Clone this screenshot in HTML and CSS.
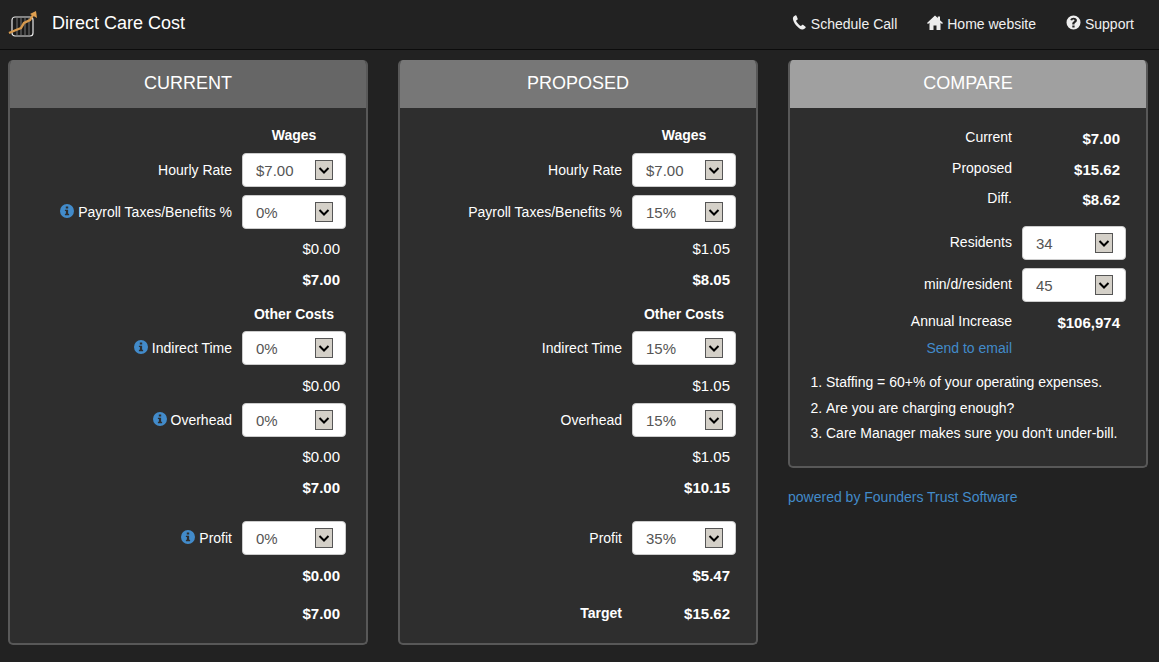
FILE: index.html
```html
<!DOCTYPE html>
<html lang="en">
<head>
    <meta charset="UTF-8">
    <title>Direct Care Cost</title>
    <link rel="stylesheet" href="styles.css">
</head>
<body>
    <svg class="defs" width="0" height="0">
        <symbol id="i-info" viewBox="0 0 14 14">
            <path fill-rule="evenodd" d="M7 0a7 7 0 1 1 0 14A7 7 0 0 1 7 0zM5.8 2.4v2.1h2.4V2.4zM4.9 5.7v1.4h1v2.6h-1v1.5h4.2V9.7h-1v-4z"/>
        </symbol>
    </svg>

    <nav class="topbar">
        <div class="brand">
            <svg class="logo" width="30" height="30" viewBox="0 0 30 30">
                <rect x="4" y="8" width="21" height="19" rx="3" fill="#1a1a1a" stroke="#e8e8e8" stroke-width="1.2"/>
                <path d="M9 9v17M13 9v17M17 9v17M21 9v17" stroke="#777" stroke-width="1"/>
                <path d="M1 24l7-3 5-2 3-5 6-3 3-5" fill="none" stroke="#d79a4e" stroke-width="2.4"/>
                <path d="M22 5l6-3 1 7z" fill="#e0a050"/>
            </svg>
            <span class="brand-name">Direct Care Cost</span>
        </div>
        <div class="nav-links">
            <a href="#">
                <svg width="15" height="15" viewBox="0 0 15 15"><path d="M3.6.3C2.6.7 1 1.8.9 3.3c-.1 2 1.200 4.600 3.100 6.900 2 2.300 4.300 4.100 6.300 4.400 1.500.2 2.700-1 3.400-2 .2-.3.100-.7-.2-.9l-2.500-1.900c-.3-.2-.7-.2-1 .1l-1 1.200c-.9-.3-2-1.200-2.900-2.300C4.900 7.700 4.200 6.500 4.100 5.600l1.300-.8c.3-.2.400-.6.300-1L4.500.7C4.300.3 3.900.1 3.600.3z"/></svg>
                Schedule Call
            </a>
            <a href="#">
                <svg width="16" height="15" viewBox="0 0 16 15"><path d="M8 .5L0 8l1 1 1.500-1.300V15h4v-4.500h3V15h4V7.700L15 9l1-1-3-2.800V1.500h-2.200v1.600z"/></svg>
                Home website
            </a>
            <a href="#">
                <svg width="15" height="15" viewBox="0 0 15 15"><path fill-rule="evenodd" d="M7.500.5a7 7 0 1 1 0 14 7 7 0 0 1 0-14zM6.300 10.500v2h2.300v-2zM7.600 2.800c-1.700 0-2.900.8-3.300 2.200l1.800.6c.2-.7.700-1 1.400-1 .6 0 1 .3 1 .8 0 .4-.3.700-.9 1.100-.9.600-1.300 1.200-1.300 2.300v.6h2.200v-.3c0-.6.200-.9.900-1.400.9-.6 1.500-1.300 1.500-2.500 0-1.500-1.300-2.400-3.300-2.400z"/></svg>
                Support
            </a>
        </div>
    </nav>

    <main class="columns">

        <section class="panel">
            <h2 class="panel-head head-current">CURRENT</h2>
            <div class="panel-body">
                <div class="row"><span></span><strong class="col-title">Wages</strong></div>
                <div class="row gap-8"><label>Hourly Rate</label><select class="pick"><option>$7.00</option></select></div>
                <div class="row gap-8"><label><svg class="info"><use href="#i-info"/></svg>Payroll Taxes/Benefits %</label><select class="pick"><option>0%</option></select></div>
                <div class="row gap-9"><span></span><span class="plain">$0.00</span></div>
                <div class="row gap-11"><span></span><strong class="amount">$7.00</strong></div>
                <div class="row gap-15"><span></span><strong class="col-title">Other Costs</strong></div>
                <div class="row gap-7"><label><svg class="info"><use href="#i-info"/></svg>Indirect Time</label><select class="pick"><option>0%</option></select></div>
                <div class="row gap-10"><span></span><span class="plain">$0.00</span></div>
                <div class="row gap-8"><label><svg class="info"><use href="#i-info"/></svg>Overhead</label><select class="pick"><option>0%</option></select></div>
                <div class="row gap-9"><span></span><span class="plain">$0.00</span></div>
                <div class="row gap-11"><span></span><strong class="amount">$7.00</strong></div>
                <div class="row gap-24"><label><svg class="info"><use href="#i-info"/></svg>Profit</label><select class="pick"><option>0%</option></select></div>
                <div class="row gap-10"><span></span><strong class="amount">$0.00</strong></div>
                <div class="row gap-18"><span></span><strong class="amount">$7.00</strong></div>
            </div>
        </section>

        <section class="panel">
            <h2 class="panel-head head-proposed">PROPOSED</h2>
            <div class="panel-body">
                <div class="row"><span></span><strong class="col-title">Wages</strong></div>
                <div class="row gap-8"><label>Hourly Rate</label><select class="pick"><option>$7.00</option></select></div>
                <div class="row gap-8"><label>Payroll Taxes/Benefits %</label><select class="pick"><option>15%</option></select></div>
                <div class="row gap-9"><span></span><span class="plain">$1.05</span></div>
                <div class="row gap-11"><span></span><strong class="amount">$8.05</strong></div>
                <div class="row gap-15"><span></span><strong class="col-title">Other Costs</strong></div>
                <div class="row gap-7"><label>Indirect Time</label><select class="pick"><option>15%</option></select></div>
                <div class="row gap-10"><span></span><span class="plain">$1.05</span></div>
                <div class="row gap-8"><label>Overhead</label><select class="pick"><option>15%</option></select></div>
                <div class="row gap-9"><span></span><span class="plain">$1.05</span></div>
                <div class="row gap-11"><span></span><strong class="amount">$10.15</strong></div>
                <div class="row gap-24"><label>Profit</label><select class="pick"><option>35%</option></select></div>
                <div class="row gap-10"><span></span><strong class="amount">$5.47</strong></div>
                <div class="row gap-18"><strong class="target">Target</strong><strong class="amount">$15.62</strong></div>
            </div>
        </section>

        <div class="side">
            <section class="panel">
                <h2 class="panel-head head-compare">COMPARE</h2>
                <div class="panel-body compare-body">
                    <div class="row"><label>Current</label><strong class="amount">$7.00</strong></div>
                    <div class="row gap-11"><label>Proposed</label><strong class="amount">$15.62</strong></div>
                    <div class="row gap-10"><label>Diff.</label><strong class="amount">$8.62</strong></div>
                    <div class="row gap-17"><label>Residents</label><select class="pick"><option>34</option></select></div>
                    <div class="row gap-8"><label>min/d/resident</label><select class="pick"><option>45</option></select></div>
                    <div class="row gap-10"><label>Annual Increase</label><strong class="amount">$106,974</strong></div>
                    <div class="row gap-6"><a class="mail" href="#">Send to email</a><span></span></div>
                    <ol class="notes">
                        <li>Staffing = 60+% of your operating expenses.</li>
                        <li>Are you are charging enough?</li>
                        <li>Care Manager makes sure you don't under-bill.</li>
                    </ol>
                </div>
            </section>
            <a class="powered" href="#">powered by Founders Trust Software</a>
        </div>

    </main>
</body>
</html>
```

FILE: styles.css
```css
* {
    margin: 0;
    padding: 0;
    box-sizing: border-box;
}

body {
    background-color: #222;
    color: #fff;
    font-family: "Liberation Sans", Arial, sans-serif;
    font-size: 14px;
    overflow: hidden;
}

a {
    color: #428bca;
    text-decoration: none;
}

.defs {
    display: block;
    height: 0;
}

.topbar {
    height: 50px;
    display: flex;
    justify-content: space-between;
    align-items: center;
    padding: 0 25px 2px 8px;
    border-bottom: 1px solid #0c0c0c;
}

.brand {
    display: flex;
    align-items: center;
    gap: 14px;
}

.brand-name {
    font-size: 18px;
}

.nav-links {
    display: flex;
    gap: 30px;
}

.nav-links a {
    color: #f0f0f0;
    display: flex;
    align-items: center;
    gap: 4px;
}

.nav-links svg {
    fill: #eee;
    margin-top: -3px;
}

.columns {
    display: flex;
    gap: 30px;
    padding: 10px 11px 0 8px;
}

.panel {
    width: 360px;
    background-color: #2e2e2e;
    border: 2px solid #585858;
    border-top: 0;
    border-radius: 5px;
    overflow: hidden;
}

.panel-head {
    height: 48px;
    line-height: 47px;
    margin: 0 -2px;
    text-align: center;
    font-size: 18px;
    font-weight: normal;
}

.head-current {
    background-color: #666;
}

.head-proposed {
    background-color: #777;
}

.head-compare {
    background-color: #a0a0a0;
}

.panel-body {
    padding: 17px 20px 20px 0;
}

.compare-body {
    padding-top: 20px;
    padding-bottom: 17px;
}

.row {
    display: grid;
    grid-template-columns: 222px 104px;
    column-gap: 10px;
    align-items: center;
    min-height: 20px;
}

.gap-6 { margin-top: 6px; }
.gap-7 { margin-top: 7px; }
.gap-8 { margin-top: 8px; }
.gap-9 { margin-top: 9px; }
.gap-10 { margin-top: 10px; }
.gap-11 { margin-top: 11px; }
.gap-15 { margin-top: 15px; }
.gap-17 { margin-top: 17px; }
.gap-18 { margin-top: 18px; }
.gap-24 { margin-top: 24px; }

.row label,
.target,
.mail {
    text-align: right;
}

.compare-body .row label {
    margin-top: -3px;
}

.col-title {
    text-align: center;
    text-indent: 0;
}

.plain,
.amount {
    display: block;
    text-align: right;
    padding-right: 6px;
    font-size: 15px;
}

.info {
    width: 14px;
    height: 14px;
    fill: #428bca;
    margin-right: 4px;
    vertical-align: -1px;
}

.pick {
    height: 34px;
    width: 104px;
    border: 1px solid #ccc;
    border-radius: 4px;
    padding-left: 13px;
    font-family: inherit;
    font-size: 15px;
    color: #555;
    appearance: none;
    -webkit-appearance: none;
    background-color: #fff;
    background-image: url("data:image/svg+xml,%3Csvg xmlns='http://www.w3.org/2000/svg' width='18' height='20'%3E%3Crect x='.5' y='.5' width='17' height='19' fill='%23d4d0c8' stroke='%23555'/%3E%3Cpath d='M4.500 8l4.500 4.500L13.500 8' fill='none' stroke='%23000' stroke-width='2'/%3E%3C/svg%3E");
    background-repeat: no-repeat;
    background-position: 72px 6px;
}

.notes {
    margin: 14px 0 0 20px;
    padding-left: 16px;
    width: 320px;
}

.notes li {
    line-height: 20px;
    margin-bottom: 5.5px;
}

.powered {
    display: block;
    margin-top: 21px;
}
```
